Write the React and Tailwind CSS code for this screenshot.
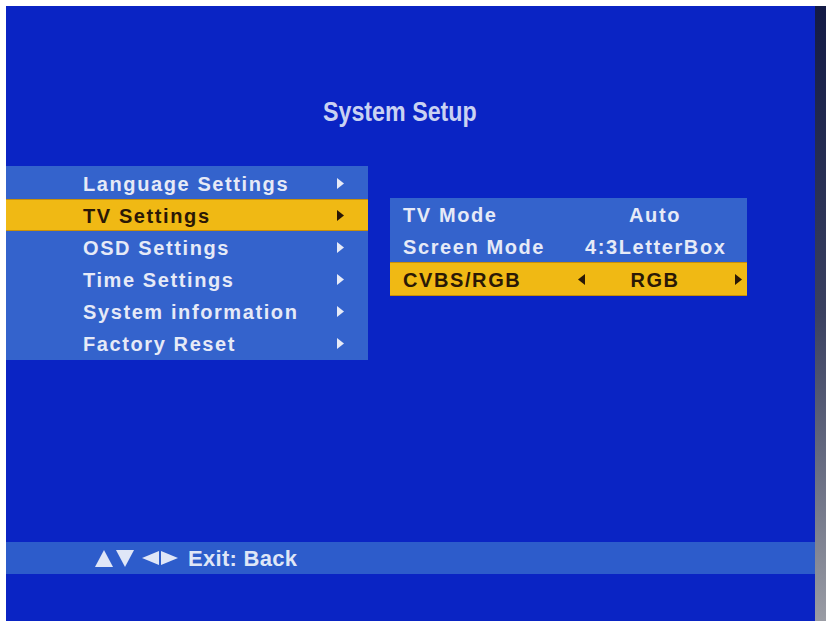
import React from 'react';

const menuFont = { fontFamily: "'Liberation Sans', Arial, sans-serif" };

const ArrowRight = ({ className }) => (
  <svg width="7" height="11" viewBox="0 0 7 11" className={className}>
    <polygon points="0,0 7,5.5 0,11" fill="currentColor" />
  </svg>
);

const ArrowLeft = ({ className }) => (
  <svg width="7" height="11" viewBox="0 0 7 11" className={className}>
    <polygon points="7,0 0,5.5 7,11" fill="currentColor" />
  </svg>
);

const mainItems = [
  'Language Settings',
  'TV Settings',
  'OSD Settings',
  'Time Settings',
  'System information',
  'Factory Reset',
];

const MainRow = ({ label, active }) => (
  <div
    className={`flex items-center h-[32px] pt-[1px] ${
      active ? 'bg-[#f0b914] text-[#2a1806] border-y border-[#c98f08]' : 'text-[#e6eaf7]'
    }`}
  >
    <span className="pl-[77px] w-[331px] text-[20px] font-bold tracking-[1.6px] leading-none">{label}</span>
    <ArrowRight />
  </div>
);

const SubRow = ({ label, value, active }) => (
  <div
    className={`flex items-center pt-[1px] ${
      active ? 'bg-[#f0b914] text-[#2a1806] border-y border-[#c98f08] h-[34px]' : 'text-[#e6eaf7] h-[32px]'
    }`}
  >
    <span className="pl-[13px] w-[188px] text-[20px] font-bold tracking-[1.6px] leading-none">{label}</span>
    {active ? <ArrowLeft /> : <span className="w-[7px]" />}
    <span className="w-[140px] text-center text-[20px] font-bold tracking-[1.6px] leading-none">{value}</span>
    {active ? <ArrowRight className="ml-[10px]" /> : null}
  </div>
);

export default function App() {
  return (
    <div className="w-[832px] h-[626px] bg-white pt-[6px] pl-[6px] overflow-hidden">
      <div className="flex w-[820px] h-[615px]">
        <div className="flex-1 flex flex-col bg-[#0a24c4]" style={menuFont}>
          <div className="pt-[92px] pl-[317px]">
            <div className="text-[28px] leading-[28px] font-bold text-[#c9d2f2] scale-x-[0.83] origin-left whitespace-nowrap">
              System Setup
            </div>
          </div>

          <div className="flex mt-[40px]">
            <div className="w-[362px] bg-[#3463cc] py-[1px]">
              {mainItems.map((item) => (
                <MainRow key={item} label={item} active={item === 'TV Settings'} />
              ))}
            </div>
            <div className="ml-[22px] mt-[32px] w-[357px] h-[98px] bg-[#3463cc]">
              <SubRow label="TV Mode" value="Auto" />
              <SubRow label="Screen Mode" value="4:3LetterBox" />
              <SubRow label="CVBS/RGB" value="RGB" active />
            </div>
          </div>

          <div className="mt-auto mb-[47px] h-[32px] bg-[#2d5ccb] flex items-center pl-[89px] text-[#dfe6f7]">
            <svg width="18" height="17" viewBox="0 0 18 17" className="mr-[3px]">
              <polygon points="9,0 18,17 0,17" fill="currentColor" />
            </svg>
            <svg width="18" height="17" viewBox="0 0 18 17" className="mr-[8px]">
              <polygon points="0,0 18,0 9,17" fill="currentColor" />
            </svg>
            <svg width="17" height="14" viewBox="0 0 17 14" className="mr-[2px]">
              <polygon points="17,0 0,7 17,14" fill="currentColor" />
            </svg>
            <svg width="17" height="14" viewBox="0 0 17 14" className="mr-[10px]">
              <polygon points="0,0 17,7 0,14" fill="currentColor" />
            </svg>
            <span className="text-[22px] leading-none font-bold tracking-[0.3px] pt-[1px]">Exit: Back</span>
          </div>
        </div>
        <div className="w-[11px] bg-gradient-to-b from-[#131a45] via-[#3a4060] to-[#9a9ca4]" />
      </div>
    </div>
  );
}
